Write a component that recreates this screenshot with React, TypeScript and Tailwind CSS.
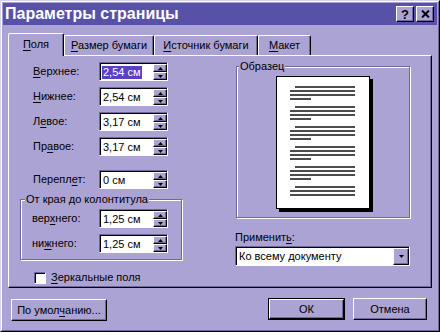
import React from "react";

function U({ children }: { children: React.ReactNode }) {
  return <span className="underline underline-offset-[2px]">{children}</span>;
}

function Tri({ up }: { up?: boolean }) {
  return (
    <svg width="5" height="3" viewBox="0 0 5 3">
      <path d={up ? "M2.5 0L5 3H0z" : "M0 0h5L2.5 3z"} fill="#000" />
    </svg>
  );
}

function SpinBtn({ up }: { up?: boolean }) {
  return (
    <div className="flex flex-1 items-center justify-center border border-t-white border-l-white border-r-black border-b-black bg-[#aba3d3] shadow-[inset_-1px_-1px_0_#6f6899]">
      <Tri up={up} />
    </div>
  );
}

function Spin({ value, selected }: { value: string; selected?: boolean }) {
  return (
    <div className="flex h-[19px] w-[69px] border border-t-[#6f6899] border-l-[#6f6899] border-r-white border-b-white">
      <div className="flex flex-1 border-t border-l border-black bg-white">
        <div className="flex flex-1 items-center pl-[1px]">
          <span className={selected ? "bg-[#5a3fc9] px-[1px] text-white" : "px-[1px]"}>{value}</span>
        </div>
        <div className="flex w-[14px] flex-col">
          <SpinBtn up />
          <SpinBtn />
        </div>
      </div>
    </div>
  );
}

function Row({ label, value, selected, labelW }: { label: React.ReactNode; value: string; selected?: boolean; labelW: string }) {
  return (
    <div className="flex h-[19px] items-center">
      <div className={labelW}>{label}</div>
      <Spin value={value} selected={selected} />
    </div>
  );
}

function Button({ children, w, isDefault }: { children: React.ReactNode; w: string; isDefault?: boolean }) {
  return (
    <div className={`${w} h-[22px] ${isDefault ? "border border-black" : ""}`}>
      <div className="flex h-full items-center justify-center border border-t-white border-l-white border-r-black border-b-black shadow-[inset_-1px_-1px_0_#6f6899]">
        {children}
      </div>
    </div>
  );
}

const pageGroups = [11, 31, 51, 71, 91, 111];

export default function App() {
  return (
    <div className="h-[332px] w-[440px] border border-t-[#d8d4ec] border-l-[#d8d4ec] border-r-black border-b-black bg-[#aba3d3] font-['Liberation_Sans',Arial,sans-serif] text-[11px] leading-[13px] text-black">
      <div className="flex h-full flex-col border border-t-white border-l-white border-r-[#6f6899] border-b-[#6f6899] p-px">
        {/* title bar */}
        <div className="flex h-[22px] items-center justify-between bg-[#5851a8] pl-[2px] pr-[3px]">
          <span className="text-[16px] font-bold leading-none text-white">Параметры страницы</span>
          <div className="flex gap-[2px]">
            <div className="flex h-[16px] w-[18px] items-center justify-center border border-t-white border-l-white border-r-black border-b-black bg-[#aba3d3] shadow-[inset_-1px_-1px_0_#6f6899] text-[13px] font-bold leading-none">
              ?
            </div>
            <div className="flex h-[16px] w-[18px] items-center justify-center border border-t-white border-l-white border-r-black border-b-black bg-[#aba3d3] shadow-[inset_-1px_-1px_0_#6f6899]">
              <svg width="9" height="8" viewBox="0 0 9 8">
                <path d="M1 0.5L8 7.5M8 0.5L1 7.5" stroke="#000" strokeWidth="2" />
              </svg>
            </div>
          </div>
        </div>

        {/* tabs */}
        <div className="ml-[5px] mt-[8px] flex h-[22px] items-end">
          <div className="relative z-10 -mb-px flex h-[23px] w-[56px] items-center justify-center rounded-t-[2px] border border-b-0 border-t-white border-l-white border-r-black bg-[#aba3d3] pb-[1px] shadow-[inset_-1px_0_0_#6f6899]">
            <span>
              <U>П</U>оля
            </span>
          </div>
          <div className="flex h-[20px] w-[90px] items-center justify-center rounded-t-[2px] border border-b-0 border-t-white border-l-white border-r-black shadow-[inset_-1px_0_0_#6f6899]">
            <span>
              <U>Р</U>азмер бумаги
            </span>
          </div>
          <div className="flex h-[20px] w-[104px] items-center justify-center rounded-t-[2px] border border-b-0 border-t-white border-l-white border-r-black shadow-[inset_-1px_0_0_#6f6899]">
            <span>
              <U>И</U>сточник бумаги
            </span>
          </div>
          <div className="flex h-[20px] w-[53px] items-center justify-center rounded-t-[2px] border border-b-0 border-t-white border-l-white border-r-black shadow-[inset_-1px_0_0_#6f6899]">
            <span>
              <U>М</U>акет
            </span>
          </div>
        </div>

        {/* panel */}
        <div className="ml-[5px] flex h-[233px] w-[424px] border border-t-white border-l-white border-r-black border-b-black shadow-[inset_-1px_-1px_0_#6f6899]">
          {/* left column */}
          <div className="ml-[11px] flex w-[162px] flex-col pt-[6px]">
            <div className="flex flex-col gap-[6px]">
              <Row labelW="w-[79px] pl-[13px]" label={<><U>В</U>ерхнее:</>} value="2,54 см" selected />
              <Row labelW="w-[79px] pl-[13px]" label={<><U>Н</U>ижнее:</>} value="2,54 см" />
              <Row labelW="w-[79px] pl-[13px]" label={<>Л<U>е</U>вое:</>} value="3,17 см" />
              <Row labelW="w-[79px] pl-[13px]" label={<>Пр<U>а</U>вое:</>} value="3,17 см" />
            </div>
            <div className="mt-[14px]">
              <Row labelW="w-[79px] pl-[13px]" label={<>Перепл<U>е</U>т:</>} value="0 см" />
            </div>
            <div className="mt-[10px] flex h-[61px] w-[162px] flex-col border border-[#6f6899] shadow-[inset_1px_1px_0_#fff,1px_1px_0_#fff]">
              <span className="-mt-[7px] ml-[4px] self-start bg-[#aba3d3] px-[1px]">От края до колонтитула</span>
              <div className="mt-[3px] flex flex-col gap-[6px]">
                <Row labelW="w-[78px] pl-[11px]" label={<>вер<U>х</U>него:</>} value="1,25 см" />
                <Row labelW="w-[78px] pl-[11px]" label={<>ни<U>ж</U>него:</>} value="1,25 см" />
              </div>
            </div>
            <div className="mt-[11px] flex items-center pl-[14px]">
              <div className="h-[12px] w-[12px] border border-t-[#6f6899] border-l-[#6f6899] border-r-white border-b-white">
                <div className="h-full w-full border-t border-l border-black bg-white" />
              </div>
              <span className="ml-[5px]">
                <U>З</U>еркальные поля
              </span>
            </div>
          </div>

          {/* right column */}
          <div className="ml-[54px] mt-[10px] flex w-[175px] flex-col">
            <div className="flex h-[152px] w-[174px] flex-col border border-[#6f6899] shadow-[inset_1px_1px_0_#fff,1px_1px_0_#fff]">
              <span className="-mt-[7px] ml-[2px] self-start bg-[#aba3d3] px-[1px]">Образец</span>
              <div className="mt-[3px] h-[133px] w-[94px] self-center border border-black bg-white shadow-[3px_3px_0_#000]">
                <svg width="92" height="131" viewBox="0 0 92 131">
                  {pageGroups.map((y, i) => (
                    <g key={y} stroke="#111" strokeWidth="1.5">
                      <line x1="18" x2="78" y1={y - 1} y2={y - 1} />
                      <line x1="13" x2="78" y1={y + 3} y2={y + 3} />
                      <line x1="13" x2="78" y1={y + 7} y2={y + 7} />
                      {i < 5 && <line x1="13" x2="34" y1={y + 11} y2={y + 11} />}
                    </g>
                  ))}
                </svg>
              </div>
            </div>
            <div className="mt-[13px] -ml-px">
              Применит<U>ь</U>:
            </div>
            <div className="-ml-px mt-[2px] flex h-[20px] w-[175px] border border-t-[#6f6899] border-l-[#6f6899] border-r-white border-b-white">
              <div className="flex flex-1 border-t border-l border-black bg-white">
                <div className="flex flex-1 items-center pl-[2px]">Ко всему документу</div>
                <div className="flex w-[16px] items-center justify-center border border-t-white border-l-white border-r-black border-b-black bg-[#aba3d3] shadow-[inset_-1px_-1px_0_#6f6899]">
                  <Tri />
                </div>
              </div>
            </div>
          </div>
        </div>

        {/* bottom buttons */}
        <div className="mt-[10px] flex items-start">
          <div className="ml-[8px] mt-[1px]">
            <Button w="w-[96px]">
              <span>
                По умол<U>ч</U>анию...
              </span>
            </Button>
          </div>
          <div className="ml-auto mr-[10px] flex gap-[8px]">
            <Button w="w-[77px]" isDefault>
              ОК
            </Button>
            <Button w="w-[74px]">Отмена</Button>
          </div>
        </div>
      </div>
    </div>
  );
}
